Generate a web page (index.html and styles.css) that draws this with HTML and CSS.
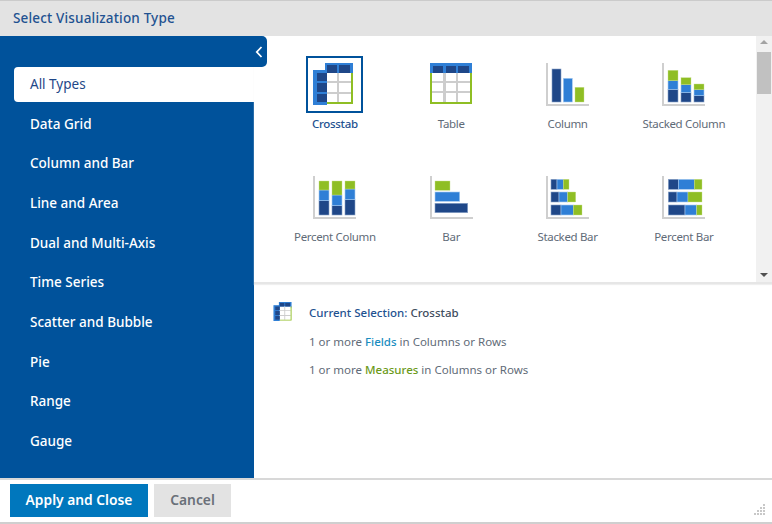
FILE: index.html
```html
<!DOCTYPE html>
<html lang="en">
<head>
<meta charset="utf-8">
<title>Select Visualization Type</title>
<link rel="stylesheet" href="styles.css">
</head>
<body>
<svg class="defs" width="0" height="0" aria-hidden="true">
  <defs>
    <g id="axis"><path class="ax" d="M7 7h2v41h41v2H7z"/></g>
    <g id="i-crosstab">
      <rect class="bl" x="17" y="5" width="28" height="12"/>
      <rect class="bl" x="5" y="12" width="14" height="35"/>
      <rect class="wh" x="19" y="15" width="24" height="29"/>
      <path class="gr" d="M29 15h2v29h-2zM19 23h24v2H19zM19 34h24v2H19z"/>
      <path class="gn" d="M43 15h2v31H19v-2h24z"/>
      <rect class="dkf" x="19" y="7" width="10" height="8"/>
      <rect class="dkf" x="31" y="7" width="11" height="8"/>
      <rect class="dkf" x="9" y="15" width="10" height="8"/>
      <rect class="dkf" x="9" y="25" width="10" height="9"/>
      <rect class="dkf" x="9" y="36" width="10" height="8"/>
    </g>
    <g id="i-table">
      <rect class="wh" x="9" y="17" width="38" height="29"/>
      <path class="gr" d="M20 17h3v29h-3zM33 17h2v29h-2zM9 25h38v2H9zM9 35h38v2H9z"/>
      <path class="gn" d="M7 17h2v29h38V17h2v31H7z"/>
      <rect class="bl" x="7" y="7" width="42" height="10"/>
      <rect class="dkf" x="10" y="10" width="10" height="7"/>
      <rect class="dkf" x="23" y="10" width="10" height="7"/>
      <rect class="dkf" x="35" y="10" width="11" height="7"/>
    </g>
    <g id="i-column">
      <use href="#axis"/>
      <rect class="dk" x="13" y="13" width="9" height="33"/>
      <rect class="md" x="24.3" y="22.3" width="9" height="23.7"/>
      <rect class="lg" x="36" y="31.3" width="9" height="14.7"/>
    </g>
    <g id="i-stackcol">
      <use href="#axis"/>
      <rect class="dk" x="13" y="33.3" width="10" height="12.7"/>
      <rect class="md" x="13" y="24.7" width="10" height="8.6"/>
      <rect class="lg" x="13" y="14.3" width="10" height="10.4"/>
      <rect class="dk" x="26" y="36.7" width="10" height="9.3"/>
      <rect class="md" x="26" y="28.7" width="10" height="8"/>
      <rect class="lg" x="26" y="21.7" width="10" height="7"/>
      <rect class="dk" x="39" y="39.7" width="10" height="6.3"/>
      <rect class="md" x="39" y="33.7" width="10" height="6"/>
      <rect class="lg" x="39" y="28" width="10" height="5.7"/>
    </g>
    <g id="i-percol">
      <use href="#axis"/>
      <rect class="dk" x="13" y="31.7" width="10" height="14.3"/>
      <rect class="md" x="13" y="21" width="10" height="10.7"/>
      <rect class="lg" x="13" y="12" width="10" height="9"/>
      <rect class="dk" x="26" y="36.7" width="10" height="9.3"/>
      <rect class="md" x="26" y="26" width="10" height="10.7"/>
      <rect class="lg" x="26" y="12" width="10" height="14"/>
      <rect class="dk" x="39" y="30.7" width="10" height="15.3"/>
      <rect class="md" x="39" y="20" width="10" height="10.7"/>
      <rect class="lg" x="39" y="12" width="10" height="8"/>
    </g>
    <g id="i-bar">
      <use href="#axis"/>
      <rect class="lg" x="12" y="12" width="15" height="9.3"/>
      <rect class="md" x="12" y="23" width="24.7" height="9.3"/>
      <rect class="dk" x="12" y="34.3" width="32.7" height="9.4"/>
    </g>
    <g id="i-stackbar">
      <use href="#axis"/>
      <rect class="dk" x="12" y="10.3" width="6" height="10"/>
      <rect class="md" x="18" y="10.3" width="6.3" height="10"/>
      <rect class="lg" x="24.3" y="10.3" width="5.7" height="10"/>
      <rect class="dk" x="12" y="23" width="8" height="10"/>
      <rect class="md" x="20" y="23" width="8.7" height="10"/>
      <rect class="lg" x="28.7" y="23" width="8" height="10"/>
      <rect class="dk" x="12" y="36" width="10" height="10"/>
      <rect class="md" x="22" y="36" width="12.3" height="10"/>
      <rect class="lg" x="34.3" y="36" width="8.7" height="10"/>
    </g>
    <g id="i-perbar">
      <use href="#axis"/>
      <rect class="dk" x="13.3" y="10.3" width="10" height="10"/>
      <rect class="md" x="23.3" y="10.3" width="16" height="10"/>
      <rect class="lg" x="39.3" y="10.3" width="7.7" height="10"/>
      <rect class="dk" x="13.3" y="23" width="8.7" height="10"/>
      <rect class="md" x="22" y="23" width="11" height="10"/>
      <rect class="lg" x="33" y="23" width="14" height="10"/>
      <rect class="dk" x="13.3" y="36" width="16.7" height="10"/>
      <rect class="md" x="30" y="36" width="11.7" height="10"/>
      <rect class="lg" x="41.7" y="36" width="5.3" height="10"/>
    </g>
  </defs>
</svg>

<div class="dialog">
  <header class="title">Select Visualization Type</header>

  <div class="content">
    <nav class="sidebar">
      <div class="collapse">
        <svg width="8" height="12" viewBox="0 0 8 12"><path d="M6.5 1 1.8 6l4.7 5" fill="none" stroke="#fff" stroke-width="1.8"/></svg>
      </div>
      <ul class="types">
        <li class="type active">All Types</li>
        <li class="type">Data Grid</li>
        <li class="type">Column and Bar</li>
        <li class="type">Line and Area</li>
        <li class="type">Dual and Multi-Axis</li>
        <li class="type">Time Series</li>
        <li class="type">Scatter and Bubble</li>
        <li class="type">Pie</li>
        <li class="type">Range</li>
        <li class="type">Gauge</li>
      </ul>
    </nav>

    <main class="main">
      <div class="gallery">
        <div class="grid">
          <div class="cell selected">
            <div class="thumb"><svg class="chart" viewBox="0 0 53 53"><use href="#i-crosstab"/></svg></div>
            <span class="name">Crosstab</span>
          </div>
          <div class="cell">
            <div class="thumb"><svg class="chart" viewBox="0 0 53 53"><use href="#i-table" x="-2" y="-2"/></svg></div>
            <span class="name">Table</span>
          </div>
          <div class="cell">
            <div class="thumb"><svg class="chart" viewBox="0 0 53 53"><use href="#i-column" x="-2" y="-2"/></svg></div>
            <span class="name">Column</span>
          </div>
          <div class="cell">
            <div class="thumb"><svg class="chart" viewBox="0 0 53 53"><use href="#i-stackcol" x="-2" y="-2"/></svg></div>
            <span class="name">Stacked Column</span>
          </div>
          <div class="cell">
            <div class="thumb"><svg class="chart" viewBox="0 0 53 53"><use href="#i-percol" x="-2" y="-2"/></svg></div>
            <span class="name">Percent Column</span>
          </div>
          <div class="cell">
            <div class="thumb"><svg class="chart" viewBox="0 0 53 53"><use href="#i-bar" x="-2" y="-2"/></svg></div>
            <span class="name">Bar</span>
          </div>
          <div class="cell">
            <div class="thumb"><svg class="chart" viewBox="0 0 53 53"><use href="#i-stackbar" x="-2" y="-2"/></svg></div>
            <span class="name">Stacked Bar</span>
          </div>
          <div class="cell">
            <div class="thumb"><svg class="chart" viewBox="0 0 53 53"><use href="#i-perbar" x="-2" y="-2"/></svg></div>
            <span class="name">Percent Bar</span>
          </div>
        </div>
        <div class="scrollbar">
          <span class="arrow up"></span>
          <span class="thumb-bar"></span>
          <span class="arrow down"></span>
        </div>
      </div>

      <section class="details">
        <svg class="mini" viewBox="5 5 40 42"><use href="#i-crosstab"/></svg>
        <div class="info">
          <p class="current"><span class="label">Current Selection:</span> <span class="value">Crosstab</span></p>
          <p class="req">1 or more <b class="fields">Fields</b> in Columns or Rows</p>
          <p class="req">1 or more <b class="measures">Measures</b> in Columns or Rows</p>
        </div>
      </section>
    </main>
  </div>

  <footer class="footer">
    <button class="btn primary">Apply and Close</button>
    <button class="btn secondary">Cancel</button>
    <svg class="grip" width="12" height="11" viewBox="0 0 12 11">
      <path fill="#c8c8c8" d="M9 0h2v2H9zM6 3h2v2H6zM9 3h2v2H9zM3 6h2v2H3zM6 6h2v2H6zM9 6h2v2H9zM0 9h2v2H0zM3 9h2v2H3zM6 9h2v2H6zM9 9h2v2H9z"/>
    </svg>
  </footer>
</div>
</body>
</html>
```
FILE: styles.css
```css
* { box-sizing: border-box; }
html, body { margin: 0; padding: 0; }
body {
  width: 772px;
  height: 524px;
  overflow: hidden;
  background: #fff;
  font-family: "Noto Sans", "Open Sans", sans-serif;
}
.defs { position: absolute; }

.ax { fill: #cfcfcf; }
.bl { fill: #2f7fd6; }
.wh { fill: #fff; }
.gr { fill: #cdcdcd; }
.gn { fill: #8fbe24; }
.dkf { fill: #1f4788; }
.dk { fill: #1f4788; stroke: #8aa3c8; stroke-width: .6; }
.md { fill: #2f7fd6; stroke: #a9cbf0; stroke-width: .6; }
.lg { fill: #8fbe24; stroke: #c8de90; stroke-width: .4; }

.dialog {
  display: flex;
  flex-direction: column;
  height: 524px;
  border-top: 1px solid #cbcbcb;
  border-bottom: 2px solid #cfcfcf;
}

.title {
  flex: none;
  height: 35px;
  padding-left: 13px;
  line-height: 34px;
  background: #e3e3e3;
  color: #1f5291;
  font-size: 13.5px;
  letter-spacing: .17px;
  font-weight: 500;
}

.content { flex: none; height: 442px; display: flex; }

.sidebar {
  flex: none;
  width: 254px;
  background: #00529b;
}
.collapse {
  position: relative;
  z-index: 1;
  width: 267px;
  height: 31px;
  background: #00529b;
  border-radius: 0 5px 5px 0;
  display: flex;
  align-items: center;
  justify-content: flex-end;
  padding-right: 4px;
}
.types {
  list-style: none;
  margin: 0;
  padding: 0 0 0 14px;
  display: flex;
  flex-direction: column;
  gap: 4.67px;
}
.type {
  height: 35px;
  line-height: 34px;
  padding-left: 16px;
  color: #fff;
  font-size: 13.5px;
  font-weight: 500;
}
.type.active {
  background: #fff;
  color: #1f4788;
  font-weight: 400;
  border-radius: 4px 0 0 4px;
}

.main { flex: 1; min-width: 0; display: flex; flex-direction: column; }

.gallery {
  flex: none;
  height: 248px;
  display: flex;
  justify-content: space-between;
  border-bottom: 2px solid #e6e6e6;
  box-shadow: 0 1px 1px #efefef;
}
.grid {
  padding: 20px 0 0 22.73px;
  display: grid;
  grid-template-columns: repeat(4, 116.33px);
  grid-auto-rows: 113px;
}
.cell { display: flex; flex-direction: column; align-items: center; }
.thumb {
  width: 57px;
  height: 57px;
  border: 2px solid transparent;
}
.selected .thumb { border-color: #00529b; }
.chart { display: block; width: 53px; height: 53px; }
.name {
  margin-top: 3px;
  font-size: 11.5px;
  letter-spacing: -.33px;
  line-height: 16px;
  color: #5f6b78;
}
.selected .name { color: #1f5291; font-weight: 500; }

.scrollbar {
  flex: none;
  width: 16px;
  background: #f1f1f1;
  display: flex;
  flex-direction: column;
  align-items: center;
}
.thumb-bar {
  width: 14px;
  height: 42px;
  margin-top: 3px;
  background: #c1c1c1;
}
.arrow { width: 0; height: 0; border-left: 4px solid transparent; border-right: 4px solid transparent; }
.arrow.up { margin-top: 4px; border-bottom: 4px solid #a3a3a3; margin-bottom: 5px; }
.arrow.down { margin-top: auto; margin-bottom: 5px; border-top: 4px solid #505050; }

.details {
  flex: 1;
  display: flex;
  align-items: flex-start;
  padding: 18px 0 0 19px;
}
.mini { flex: none; width: 19px; height: 19px; }
.info { margin-left: 17px; }
.info p { margin: 0; font-size: 11.5px; line-height: 16px; color: #5f6b78; }
.info .current { margin-top: 3px; margin-bottom: 13px; }
.info .req { margin-bottom: 12.3px; }
.label { color: #1f5291; font-weight: 500; }
.value { color: #3f4d5e; font-weight: 500; }
.fields { color: #1a8dbf; font-weight: 500; }
.measures { color: #6c9a1a; font-weight: 500; }

.footer {
  flex: 1;
  position: relative;
  display: flex;
  align-items: flex-start;
  gap: 6px;
  padding: 4px 0 0 10px;
  border-top: 2px solid #d8d8d8;
}
.btn {
  height: 33px;
  border: 0;
  padding: 0 0 2px;
  font-family: inherit;
  font-size: 13.8px;
  font-weight: 600;
  border-radius: 0;
}
.primary { width: 138px; background: #0077bd; color: #fff; }
.secondary { width: 77px; background: #e3e3e3; color: #6a7079; }
.grip { position: absolute; right: 6px; bottom: 7px; }
```
